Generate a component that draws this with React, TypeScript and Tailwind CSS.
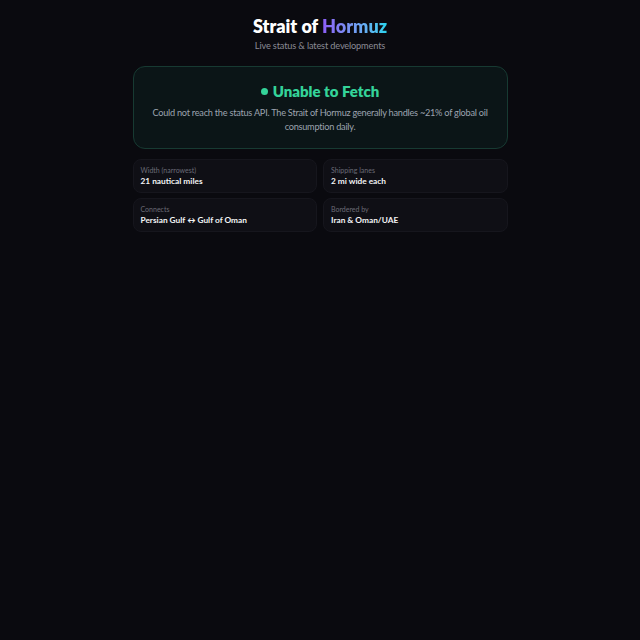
export default function App() {
  const items = [
    { label: "Width (narrowest)", value: "21 nautical miles" },
    { label: "Shipping lanes", value: "2 mi wide each" },
    { label: "Connects", value: "Persian Gulf \u2194 Gulf of Oman" },
    { label: "Bordered by", value: "Iran & Oman/UAE" },
  ];
  return (
    <div className="min-h-screen w-full bg-[#0a0a0f] text-white" style={{ fontFamily: 'Lato, sans-serif' }}>
      <div className="mx-auto w-[375px] pt-[16px]">
        <h1 className="text-center text-[18px] font-extrabold leading-[21px] text-white">
          Strait of{" "}
          <span className="bg-gradient-to-r from-[#8b5cf6] to-[#22d3ee] bg-clip-text text-transparent">Hormuz</span>
        </h1>
        <p className="mt-[2px] text-center text-[9.2px] leading-[14px] tracking-[-0.15px] text-[#8b8b95]">Live status &amp; latest developments</p>
        <div className="mt-[13px] rounded-[12px] border border-[#173a32] bg-[#0b1517] px-[14px] pb-[14px] pt-[15px] text-center">
          <div className="flex items-center justify-center gap-[5px]">
            <span className="h-[7px] w-[7px] rounded-full bg-[#34d399]" />
            <span className="text-[15px] font-extrabold leading-[18px] text-[#34d399]">Unable to Fetch</span>
          </div>
          <p className="mt-[6px] text-[9.2px] leading-[14px] tracking-[-0.25px] text-[#9ca3af]">
            Could not reach the status API. The Strait of Hormuz generally handles ~21% of global oil consumption daily.
          </p>
        </div>
        <div className="mt-[10px] grid grid-cols-2 gap-x-[6px] gap-y-[5px]">
          {items.map((it) => (
            <div key={it.label} className="h-[34px] rounded-[8px] border border-[#16161d] bg-[#0f0f15] px-[7px] pt-[6px]">
              <div className="text-[7px] leading-[9px] text-[#6b6b75]">{it.label}</div>
              <div className="text-[8.3px] font-bold leading-[12px] text-[#f3f4f6]">{it.value}</div>
            </div>
          ))}
        </div>
      </div>
    </div>
  );
}
